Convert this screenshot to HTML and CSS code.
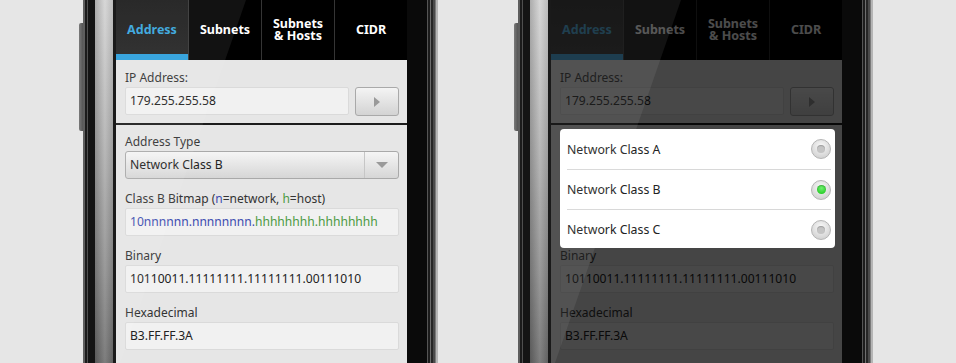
FILE: index.html
```html
<!DOCTYPE html>
<html lang="en">
<head>
  <meta charset="UTF-8" />
  <title>IP Calculator - Address</title>
  <link rel="stylesheet" href="styles.css">
</head>
<body>

  <div class="stage">

    <div class="phone">
      <div class="side-key"></div>
      <div class="device">
        <div class="bezel-l"><div class="chrome"></div></div>
        <div class="screen">
          <div class="tabs">
            <div class="tab active">Address</div>
            <div class="tab">Subnets</div>
            <div class="tab">Subnets<br>&amp; Hosts</div>
            <div class="tab">CIDR</div>
          </div>
          <div class="panel-top">
            <div class="label">IP Address:</div>
            <div class="ip-row">
              <div class="field">179.255.255.58</div>
              <div class="go"><span class="play"></span></div>
            </div>
          </div>
          <div class="panel">
            <div class="label">Address Type</div>
            <div class="spinner">
              <div class="spinner-text">Network Class B</div>
              <div class="spinner-arrow"><span class="caret"></span></div>
            </div>
            <div class="label">Class B Bitmap (<span class="net">n</span>=network, <span class="host">h</span>=host)</div>
            <div class="field"><span class="net">10nnnnnn.nnnnnnnn.</span><span class="host">hhhhhhhh.hhhhhhhh</span></div>
            <div class="label">Binary</div>
            <div class="field">10110011.11111111.11111111.00111010</div>
            <div class="label">Hexadecimal</div>
            <div class="field">B3.FF.FF.3A</div>
          </div>
          <div class="glare"></div>
        </div>
        <div class="bezel-r"></div>
      </div>
    </div>

    <div class="phone">
      <div class="side-key"></div>
      <div class="device">
        <div class="bezel-l"><div class="chrome"></div></div>
        <div class="screen">
          <div class="tabs">
            <div class="tab active">Address</div>
            <div class="tab">Subnets</div>
            <div class="tab">Subnets<br>&amp; Hosts</div>
            <div class="tab">CIDR</div>
          </div>
          <div class="panel-top">
            <div class="label">IP Address:</div>
            <div class="ip-row">
              <div class="field">179.255.255.58</div>
              <div class="go"><span class="play"></span></div>
            </div>
          </div>
          <!-- the part under the dialog is kept for layout but not painted -->
          <div class="panel">
            <div class="label covered">Address Type</div>
            <div class="spinner covered">
              <div class="spinner-text">Network Class B</div>
              <div class="spinner-arrow"><span class="caret"></span></div>
            </div>
            <div class="label covered">Class B Bitmap (<span class="net">n</span>=network, <span class="host">h</span>=host)</div>
            <div class="field covered"><span class="net">10nnnnnn.nnnnnnnn.</span><span class="host">hhhhhhhh.hhhhhhhh</span></div>
            <div class="label">Binary</div>
            <div class="field">10110011.11111111.11111111.00111010</div>
            <div class="label">Hexadecimal</div>
            <div class="field">B3.FF.FF.3A</div>
          </div>
          <div class="dim"></div>
          <div class="dialog">
            <div class="option">Network Class A <span class="radio"></span></div>
            <div class="option">Network Class B <span class="radio on"></span></div>
            <div class="option">Network Class C <span class="radio"></span></div>
          </div>
          <div class="glare"></div>
        </div>
        <div class="bezel-r"></div>
      </div>
    </div>

  </div>

</body>
</html>
```

FILE: styles.css
```css
body {
  margin: 0;
  height: 363px;
  overflow: hidden;
  background: #e6e6e6;
  font-family: 'Noto Sans', 'Open Sans', sans-serif;
  color: #333;
}

.stage {
  display: flex;
  gap: 76px;
  padding-left: 79px;
  height: 363px;
}

.phone {
  display: flex;
  align-items: flex-start;
}

.side-key {
  width: 4px;
  height: 108px;
  margin-top: 23px;
  border-radius: 2px 0 0 2px;
  background: linear-gradient(to right, #7a7a7a, #555);
}

.device {
  display: flex;
  height: 363px;
}

/* left bezel: thin dark rims, then the chrome strip */
.bezel-l {
  width: 33px;
  box-sizing: border-box;
  padding: 0 3px 0 12px;
  display: flex;
  background: linear-gradient(to right,
    #5e5e5e 0 2px, #1b1b1b 2px 4px, #4f4f4f 4px 5px,
    #141414 5px 12px, #1a1a1a 12px 33px);
}

.chrome {
  flex: 1;
  background:
    linear-gradient(to right, rgba(0,0,0,0.18), rgba(255,255,255,0.12) 55%, rgba(0,0,0,0.1)),
    linear-gradient(to bottom, #d2d2d2, #b0b0b0 40%, #8c8c8c 75%, #6c6c6c);
}

.bezel-r {
  width: 31px;
  background: linear-gradient(to right,
    #0a0a0a 0 20px, #555 20px 21px, #1c1c1c 21px 23px,
    #6e6e6e 23px 24px, #262626 24px 26px, #4a4a4a 26px 28px,
    #7a7a7a 28px 29px, #b5b5b5 29px 31px);
}

.screen {
  width: 291px;
  position: relative;
  overflow: hidden;
  background: #e6e6e6;
}

/* tab bar */
.tabs {
  display: flex;
  height: 60px;
  background: #000;
}

.tab {
  flex: 1;
  display: flex;
  align-items: center;
  justify-content: center;
  border-left: 1px solid #353535;
  color: #fff;
  font-size: 12.5px;
  font-weight: bold;
  line-height: 12.5px;
  text-align: center;
}

.tab:first-child {
  border-left: none;
}

.tab.active {
  background: linear-gradient(#191919, #242424);
  color: #35a4dd;
  box-shadow: inset 0 -6px 0 #2a9fdc;
}

/* form panels */
.panel-top {
  padding: 9px 8px 7px 9px;
  border-bottom: 2px solid #1c1c1c;
}

.panel {
  padding: 8px 8px 0 9px;
}

.label {
  font-size: 12px;
  line-height: 17px;
  margin-bottom: 1px;
  color: #333;
}

.ip-row {
  display: flex;
  gap: 6px;
}

.ip-row .field {
  flex: 1;
  margin-bottom: 0;
}

.field {
  height: 28px;
  box-sizing: border-box;
  padding-left: 4px;
  margin-bottom: 11px;
  background: #f1f1f1;
  border: 1px solid #dadada;
  border-radius: 2px;
  font-size: 12.1px;
  line-height: 26px;
  color: #222;
  white-space: nowrap;
}

.net {
  color: #3c4db0;
}

.host {
  color: #4c9a42;
}

.covered {
  visibility: hidden;
}

.go {
  width: 44px;
  height: 29px;
  box-sizing: border-box;
  display: flex;
  align-items: center;
  justify-content: center;
  border: 1px solid #a9a9a9;
  border-radius: 3px;
  background: linear-gradient(#f4f4f4, #d3d3d3);
}

.play {
  width: 0;
  height: 0;
  border-left: 6px solid #999;
  border-top: 5px solid transparent;
  border-bottom: 5px solid transparent;
}

.spinner {
  display: flex;
  height: 28px;
  box-sizing: border-box;
  margin-bottom: 11px;
  border: 1px solid #a9a9a9;
  border-radius: 3px;
  background: linear-gradient(#f5f5f5, #d6d6d6);
}

.spinner-text {
  flex: 1;
  padding-left: 4px;
  font-size: 12.2px;
  line-height: 26px;
  color: #222;
}

.spinner-arrow {
  width: 33px;
  display: flex;
  align-items: center;
  justify-content: center;
  border-left: 1px solid #c6c6c6;
}

.caret {
  width: 0;
  height: 0;
  border-top: 6px solid #9a9a9a;
  border-left: 6px solid transparent;
  border-right: 6px solid transparent;
}

/* dialog state */
.dim {
  position: absolute;
  inset: 0;
  background: rgba(0, 0, 0, 0.7);
}

.dialog {
  position: absolute;
  top: 129px;
  left: 9px;
  width: 275px;
  height: 119px;
  box-sizing: border-box;
  padding: 0 4px 0 7px;
  background: #fff;
  border-radius: 4px;
}

.option {
  display: flex;
  align-items: center;
  justify-content: space-between;
  height: 40px;
  box-sizing: border-box;
  font-size: 12.3px;
  color: #222;
}

.option + .option {
  border-top: 1px solid #d8d8d8;
}

.radio {
  width: 20px;
  height: 20px;
  box-sizing: border-box;
  display: flex;
  align-items: center;
  justify-content: center;
  border-radius: 50%;
  border: 1px solid #b4b4b4;
  background: radial-gradient(circle at 50% 35%, #fafafa, #d4d4d4 75%);
}

.radio::after {
  content: '';
  width: 8px;
  height: 8px;
  border-radius: 50%;
  background: #c4c4c4;
  box-shadow: inset 0 1px 1px rgba(0,0,0,0.2);
}

.radio.on::after {
  width: 9px;
  height: 9px;
  background: radial-gradient(circle at 50% 35%, #6ff06f, #14c414);
}

.glare {
  position: absolute;
  inset: 0;
  background: rgba(255, 255, 255, 0.07);
  clip-path: polygon(0 0, 130px 0, 4px 363px, 0 363px);
  pointer-events: none;
}
```
